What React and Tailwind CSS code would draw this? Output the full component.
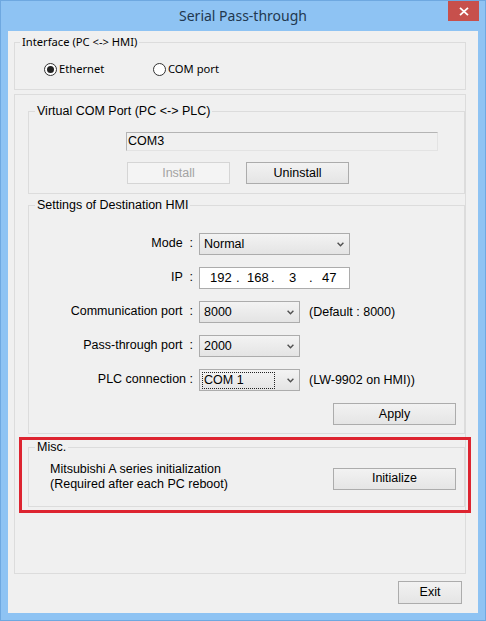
import React from "react";

const sans = "font-['Liberation_Sans',Arial,sans-serif]";
const ui = "font-['Noto_Sans','Open_Sans',sans-serif]";

function Chevron() {
  return (
    <svg width="7" height="5" viewBox="0 0 7 5">
      <path d="M0.6 0.8 L3.5 3.8 L6.4 0.8" fill="none" stroke="#505050" strokeWidth="1.4" />
    </svg>
  );
}

function Combo({ value, width, focused }) {
  return (
    <div className={`flex items-center h-[22px] ${width} border border-[#acacac] bg-linear-to-b from-[#f3f3f3] to-[#e4e4e4] pl-[2px] pr-[5px]`}>
      <div className={`flex-1 h-[17px] flex items-center pl-[1px] ${focused ? "border border-dotted border-[#222] mr-[12px]" : "border border-transparent"}`}>
        {value}
      </div>
      <Chevron />
    </div>
  );
}

function Button({ children, width, disabled }) {
  return (
    <div
      className={`flex items-center justify-center h-[22px] ${width} border ${
        disabled
          ? "border-[#d5d5d5] bg-[#f4f4f4] text-[#a3a3a3]"
          : "border-[#acacac] bg-linear-to-b from-[#f2f2f2] to-[#e5e5e5] text-black"
      }`}
    >
      {children}
    </div>
  );
}

function Radio({ checked, label, width }) {
  return (
    <div className={`flex items-center ${width}`}>
      <div className="w-[13px] h-[13px] rounded-full border border-[#333] bg-white flex items-center justify-center">
        {checked && <div className="w-[7px] h-[7px] rounded-full bg-[#222]" />}
      </div>
      <span className="ml-[2px]">{label}</span>
    </div>
  );
}

function Row({ label, children, note }) {
  return (
    <div className="flex items-center h-[22px]">
      <div className="w-[164px] text-right whitespace-pre -mt-[2px]">{label}</div>
      <div className="ml-[6px]">{children}</div>
      {note && <div className="ml-[9px]">{note}</div>}
    </div>
  );
}

export default function App() {
  return (
    <div className={`relative w-[486px] h-[621px] bg-[#8ec3f3] border border-[#6ea8e0] flex flex-col ${sans} text-[12.5px] text-black`}>
      {/* title bar */}
      <div className="h-[30px] flex items-center justify-center">
        <span className={`${ui} text-[14px] text-[#22384f] -mt-[1px]`}>Serial Pass-through</span>
      </div>
      <div className="absolute top-0 right-[6px] w-[31px] h-[20px] bg-[#c7504c] flex items-center justify-center">
        <svg width="10" height="9" viewBox="0 0 10 9">
          <path d="M1 0.8 L9 8.2 M9 0.8 L1 8.2" stroke="#fff" strokeWidth="1.8" />
        </svg>
      </div>

      {/* client area */}
      <div className="ml-[7px] w-[470px] h-[582px] bg-[#f0f0f0] flex flex-col">
        <fieldset className={`mt-[3px] ml-[6px] w-[452px] h-[56px] border border-[#dcdcdc] ${ui} text-[11.2px]`}>
          <legend className="ml-[5px] px-[2px] leading-[16px]">Interface (PC &lt;-&gt; HMI)</legend>
          <div className="flex items-center mt-[11px] pl-[29px] h-[16px]">
            <Radio checked label="Ethernet" width="w-[109px]" />
            <Radio label="COM port" />
          </div>
        </fieldset>

        <div className="mt-[4px] ml-[6px] w-[452px] h-[480px] border border-[#dcdcdc] flex flex-col">
          <fieldset className="mt-[8px] ml-[13px] w-[437px] h-[91px] border border-[#dcdcdc]">
            <legend className="ml-[6px] px-[2px] leading-[16px]">Virtual COM Port (PC &lt;-&gt; PLC)</legend>
            <div className="mt-[13px] ml-[97px] w-[312px] h-[19px] border border-[#b4b4b4] border-r-[#e3e3e3] border-b-[#e3e3e3] bg-[#f0f0f0] flex items-center pl-[1px]">
              COM3
            </div>
            <div className="flex mt-[11px] ml-[98px] gap-[16px]">
              <Button width="w-[103px]" disabled>Install</Button>
              <Button width="w-[103px]">Uninstall</Button>
            </div>
          </fieldset>

          <fieldset className="mt-[3px] ml-[13px] w-[437px] h-[237px] border border-[#dcdcdc]">
            <legend className="ml-[6px] px-[2px] leading-[16px]">Settings of Destination HMI</legend>
            <div className="mt-[20px] flex flex-col gap-[12px]">
              <Row label="Mode  :">
                <Combo value="Normal" width="w-[151px]" />
              </Row>
              <Row label="IP  :">
                <div className="flex items-center h-[22px] w-[151px] border border-[#acacac] bg-white pl-[10px] text-[13px]">
                  <span className="w-[26px]">192</span>
                  <span className="w-[11px]">.</span>
                  <span className="w-[24px]">168</span>
                  <span className="w-[18px]">.</span>
                  <span className="w-[20px]">3</span>
                  <span className="w-[13px]">.</span>
                  <span>47</span>
                </div>
              </Row>
              <Row label="Communication port  :" note="(Default : 8000)">
                <Combo value="8000" width="w-[101px]" />
              </Row>
              <Row label="Pass-through port  :">
                <Combo value="2000" width="w-[101px]" />
              </Row>
              <Row label="PLC connection :" note="(LW-9902 on HMI))">
                <Combo value="COM 1" width="w-[101px]" focused />
              </Row>
            </div>
            <div className="flex justify-end mr-[8px] mt-[12px]">
              <Button width="w-[123px]">Apply</Button>
            </div>
          </fieldset>

          <fieldset className="mt-[5px] ml-[13px] w-[437px] h-[68px] border border-[#dcdcdc]">
            <legend className="ml-[6px] px-[2px] leading-[16px]">Misc.</legend>
            <div className="flex items-center justify-between mt-[10px] pl-[21px] pr-[8px]">
              <div className="leading-[15px] -mt-[3px]">
                <div>Mitsubishi A series initialization</div>
                <div>(Required after each PC reboot)</div>
              </div>
              <Button width="w-[123px]">Initialize</Button>
            </div>
          </fieldset>
        </div>

        <div className="flex justify-end mt-[7px] mr-[16px]">
          <div className="flex items-center justify-center w-[64px] h-[23px] border border-[#acacac] bg-linear-to-b from-[#f2f2f2] to-[#e5e5e5]">
            Exit
          </div>
        </div>
      </div>

      {/* highlight annotation */}
      <div className="absolute left-[18px] top-[436px] w-[452px] h-[76px] border-[3px] border-[#dd2430] pointer-events-none" />
    </div>
  );
}
